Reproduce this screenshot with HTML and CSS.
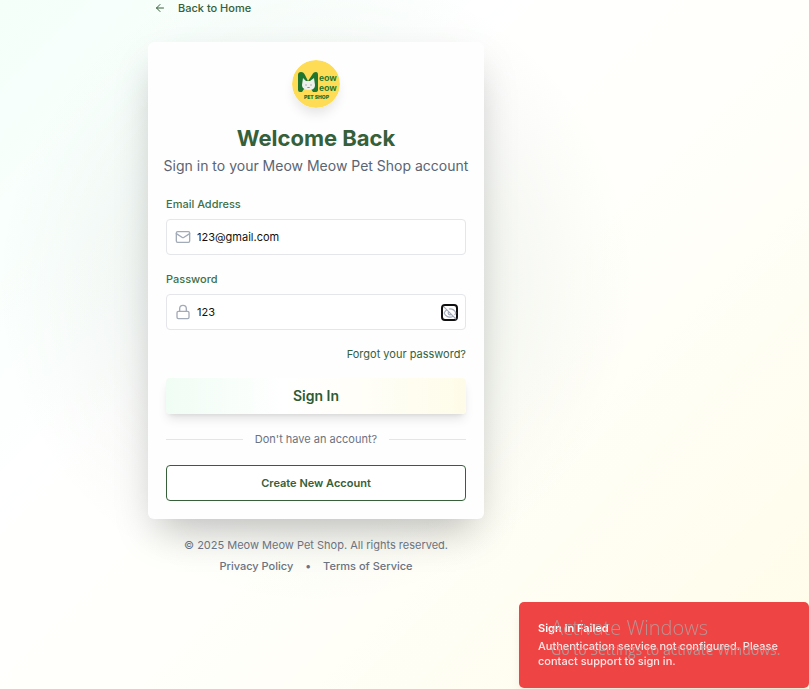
FILE: index.html
```html
<!DOCTYPE html>
<html lang="en">
<head>
<meta charset="utf-8">
<meta name="viewport" content="width=device-width, initial-scale=1">
<title>Sign In - Meow Meow Pet Shop</title>
<link rel="stylesheet" href="styles.css">
</head>
<body>
<main class="page">
  <div class="column">
    <a class="back" href="#">
      <svg class="back-icon" viewBox="0 0 24 24"><path d="m12 19-7-7 7-7M19 12H5"/></svg>
      Back to Home
    </a>
    <section class="card">
      <header class="intro">
        <svg class="logo" viewBox="0 0 48 48" role="img" aria-label="Meow Meow Pet Shop">
          <circle cx="24" cy="24" r="24" fill="#ffdc55"/>
          <path d="M6 30V15q0-3 3-3c2 0 3 1 4 3l3 6 4-6c1-2 2-3 4-3q2 0 2 3v15q0 2-3 2h-2l-2-3h-7l-2 3H8q-2 0-2-2Z" fill="#21762f"/>
          <path d="M11 18l3 3h4l4-3 1 7c0 4-3 5-6 5s-7-1-7-5Z" fill="#eef0ed"/>
          <path d="M13.500 25h1M18.500 25h1M15.500 28l1-1 1 1" fill="none" stroke="#527057" stroke-width=".9"/>
          <g class="logo-name"><text x="27" y="21">eow</text><text x="27" y="31">eow</text></g>
          <text class="logo-shop" x="12" y="39">PET SHOP</text>
        </svg>
        <h1>Welcome Back</h1>
        <p>Sign in to your Meow Meow Pet Shop account</p>
      </header>
      <form class="form">
        <div class="field">
          <label for="email">Email Address</label>
          <div class="control">
            <svg class="icon" viewBox="0 0 24 24"><rect x="2" y="4" width="20" height="16" rx="2"/><path d="m22 7-8.970 5.700a2 2 0 0 1-2.060 0L2 7"/></svg>
            <input id="email" type="email" value="123@gmail.com">
          </div>
        </div>
        <div class="field">
          <label for="password">Password</label>
          <div class="control">
            <svg class="icon" viewBox="0 0 24 24"><rect x="3" y="11" width="18" height="11" rx="2"/><path d="M7 11V7a5 5 0 0 1 10 0v4"/></svg>
            <input id="password" type="text" value="123">
            <button class="toggle" type="button" aria-label="Hide password">
              <svg class="icon" viewBox="0 0 24 24"><path d="M9.880 9.880a3 3 0 1 0 4.240 4.240M10.730 5.080A10 10 0 0 1 12 5c7 0 10 7 10 7a13 13 0 0 1-1.670 2.680M6.610 6.610A13.500 13.500 0 0 0 2 12s3 7 10 7a9.700 9.700 0 0 0 5.390-1.610M2 2l20 20"/></svg>
            </button>
          </div>
        </div>
        <a class="forgot" href="#">Forgot your password?</a>
        <button class="submit" type="submit">Sign In</button>
      </form>
      <p class="divider">Don't have an account?</p>
      <button class="create" type="button">Create New Account</button>
    </section>
    <footer class="footer">
      <p>© 2025 Meow Meow Pet Shop. All rights reserved.</p>
      <nav><a href="#">Privacy Policy</a><span>•</span><a href="#">Terms of Service</a></nav>
    </footer>
  </div>
</main>
<aside class="toast" role="alert">
  <strong>Sign In Failed</strong>
  <p>Authentication service not configured. Please contact support to sign in.</p>
</aside>
<div class="watermark">
  <p class="watermark-title">Activate Windows</p>
  <p>Go to Settings to activate Windows.</p>
</div>
</body>
</html>
```
FILE: styles.css
```css
* { box-sizing: border-box; }
html { min-height: 100%; background: linear-gradient(135deg, #f4fffa 0%, #fff 35%, #fffffa 60%, #fffce8 100%) fixed; }
body { margin: 0; font: 11px/16px Inter, sans-serif; color: #6b7280; overflow: hidden; }
p, h1 { margin: 0; }
a { color: inherit; text-decoration: none; }
button, input { font: inherit; }
svg { display: block; }

.page {
  max-width: 632px;
  min-height: 100vh;
  background: radial-gradient(circle 320px at 50% 285px, rgba(50, 90, 60, .09) 0%, rgba(50, 90, 60, .05) 55%, rgba(50, 90, 60, .02) 80%, transparent 100%);
}
.column { max-width: 336px; margin: 0 auto; }
.back { display: inline-flex; align-items: center; gap: 12px; padding-left: 6px; color: #356039; font-weight: 500; }
.back-icon { width: 12px; height: 12px; fill: none; stroke: currentColor; stroke-width: 2; stroke-linecap: round; stroke-linejoin: round; }

.card {
  margin-top: 24px;
  padding: 18px;
  border-radius: 6px;
  background: #fefefe;
  box-shadow: 0 19px 38px -9px rgba(0, 0, 0, .25);
}
.intro { display: flex; flex-direction: column; align-items: center; text-align: center; }
.logo { width: 48px; height: 48px; border-radius: 50%; box-shadow: 0 8px 12px -2px rgba(0, 0, 0, .1); }
.logo-name { fill: #21762f; font: 700 9px "Liberation Sans Narrow", "Liberation Sans", sans-serif; }
.logo-shop { fill: #21762f; font: 900 5px Inter, sans-serif; }
h1 { margin-top: 16px; color: #356039; font-size: 22px; line-height: 28px; font-weight: 700; }
.intro p { margin-top: 4px; font-size: 14px; line-height: 20px; color: #5b6472; white-space: nowrap; }

.form { display: flex; flex-direction: column; margin-top: 20px; }
.field { display: flex; flex-direction: column; gap: 7px; margin-bottom: 16px; }
.field label { color: #3d7046; font-weight: 500; }
.control { display: flex; align-items: center; gap: 6px; height: 36px; padding: 0 7px 0 8px; border: 1px solid #e4e6ea; border-radius: 4px; background: #fff; }
.control input { flex: 1; min-width: 0; padding: 0; border: 0; outline: 0; background: none; color: #111; }
.icon { width: 16px; height: 16px; fill: none; stroke: #a3aab8; stroke-width: 2; stroke-linecap: round; stroke-linejoin: round; }
.toggle { display: grid; place-items: center; width: 17px; height: 17px; padding: 0; border: 2px solid #101010; border-radius: 4px; background: #fff; }
.toggle .icon { width: 14px; height: 14px; }
.forgot { align-self: flex-end; color: #356039; font-weight: 400; }
.submit { height: 36px; margin-top: 16px; border: 0; border-radius: 4px; background: linear-gradient(90deg, #f0fdf4, #fff 40%, #fffef8 65%, #fefce8); color: #2d5a33; font-size: 14px; font-weight: 600; box-shadow: 0 7px 11px -2px rgba(0, 0, 0, .1), 0 3px 5px -3px rgba(0, 0, 0, .12); }
.divider { display: flex; align-items: center; gap: 12px; margin: 17px 0 18px; }
.divider::before, .divider::after { content: ""; flex: 1; height: 1px; background: #e2e5e9; }
.create { display: block; width: 100%; height: 36px; border: 1px solid #356039; border-radius: 4px; background: #fff; color: #356039; font-weight: 600; }

.footer { margin-top: 18px; text-align: center; }
.footer nav { display: flex; justify-content: center; gap: 12px; margin-top: 5px; font-weight: 500; }

.toast { position: fixed; right: 0; bottom: 1px; width: 290px; padding: 19px; border-radius: 5px; background: #ef4444; color: #fde6e6; line-height: 15px; font-weight: 500; box-shadow: 0 8px 12px -3px rgba(0, 0, 0, .1); }
.toast strong { display: block; margin-bottom: 3px; color: #fff; font-weight: 600; }
.watermark { position: fixed; right: 21px; bottom: 29px; width: 237px; color: rgba(175, 165, 165, .8); font: 14px/20px "Open Sans", sans-serif; white-space: nowrap; pointer-events: none; }
.watermark-title { font-size: 20px; line-height: 24px; font-weight: 300; }
```
